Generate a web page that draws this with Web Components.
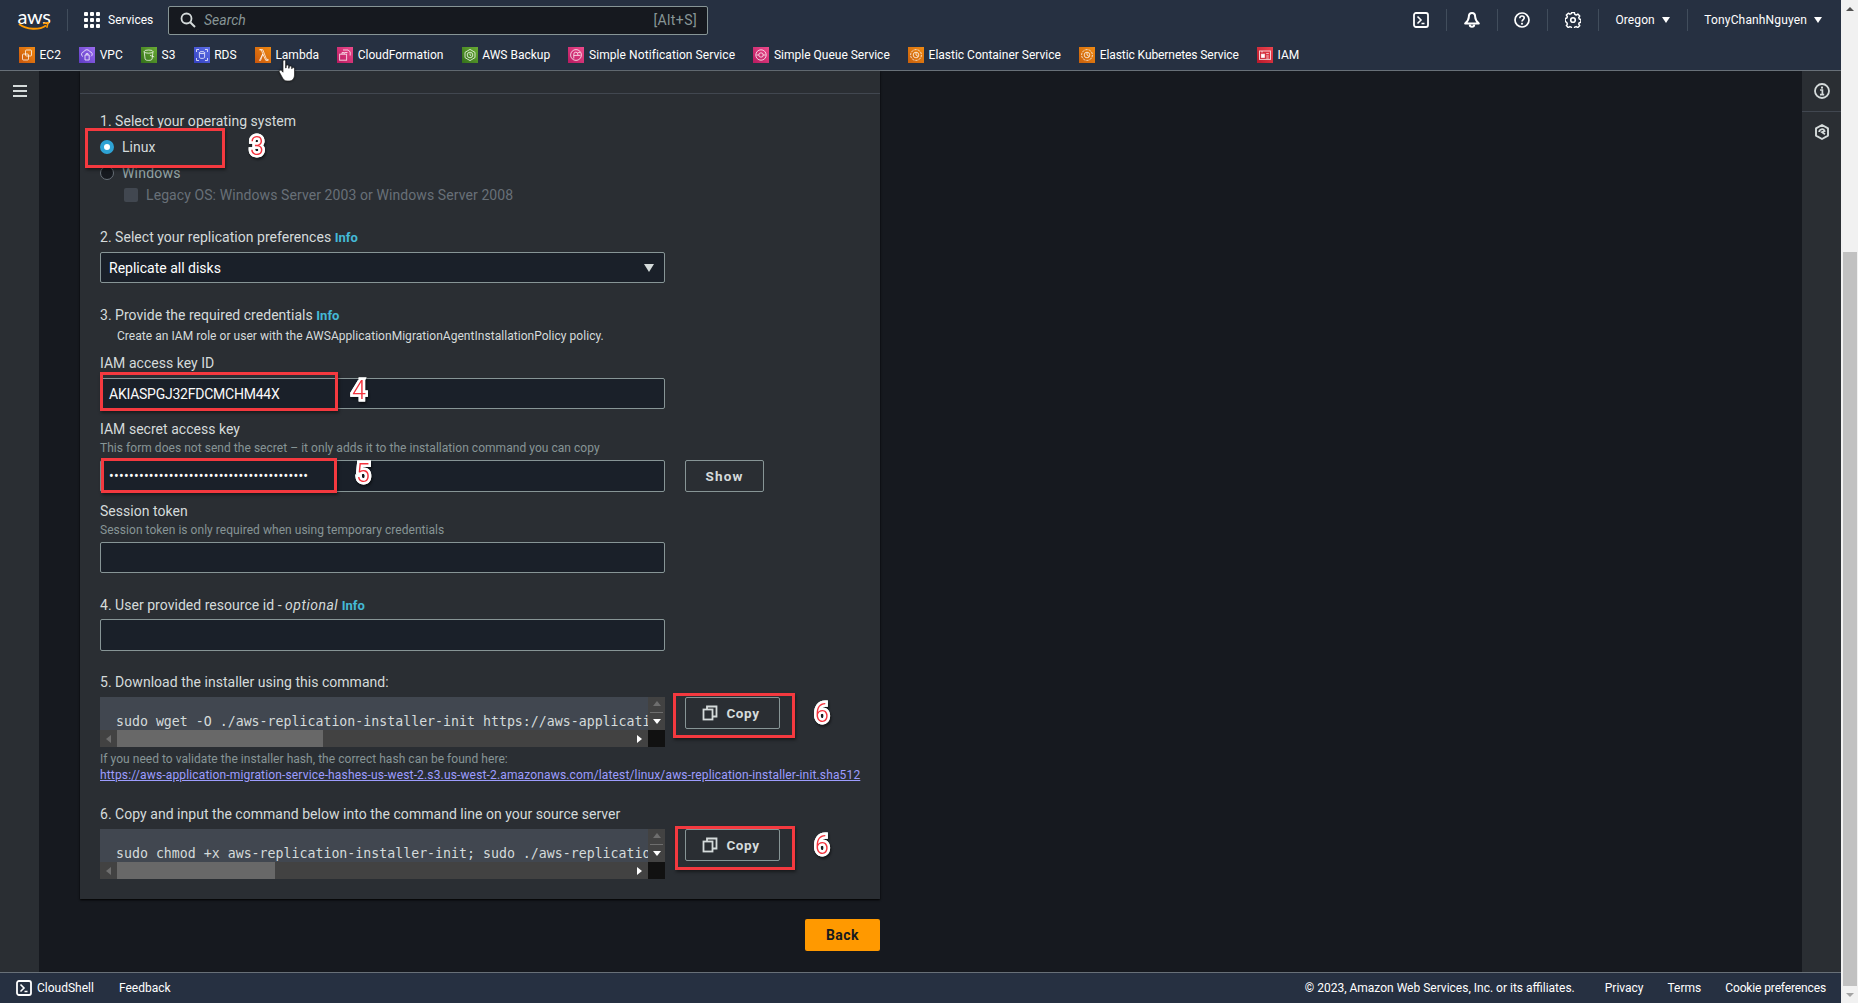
<!DOCTYPE html>
<html lang="en">
<head>
<meta charset="utf-8">
<title>Application Migration Service</title>
<style>
  html, body { margin: 0; height: 100%; overflow: hidden; background: #16191f; }
  body { font-family: Roboto, "Liberation Sans", sans-serif; font-size: 14px; color: #d5dbdb; }
</style>
</head>
<body>
<aws-console>
  <aws-header slot="header">
    <nav-item><nav-icon name="shell"></nav-icon></nav-item>
    <nav-item divided><nav-icon name="bell"></nav-icon></nav-item>
    <nav-item divided><nav-icon name="help"></nav-icon></nav-item>
    <nav-item divided><nav-icon name="gear"></nav-icon></nav-item>
    <nav-item divided caret style="letter-spacing:.1px">Oregon</nav-item>
    <nav-item divided caret style="letter-spacing:.15px">TonyChanhNguyen</nav-item>
    <fav-item slot="favs" color="#f08a12,#c9560c" icon="ec2">EC2</fav-item>
    <fav-item slot="favs" color="#9a6bf0,#5f3cc4" icon="vpc">VPC</fav-item>
    <fav-item slot="favs" color="#6aac34,#33701a" icon="s3">S3</fav-item>
    <fav-item slot="favs" color="#5f70e8,#3240c0" icon="rds">RDS</fav-item>
    <fav-item slot="favs" color="#f08a12,#c9560c" icon="lambda">Lambda</fav-item>
    <fav-item slot="favs" color="#ee4a8c,#b81a60" icon="cf">CloudFormation</fav-item>
    <fav-item slot="favs" color="#6aac34,#33701a" icon="backup">AWS Backup</fav-item>
    <fav-item slot="favs" color="#ee4a8c,#b81a60" icon="sns" style="letter-spacing:.08px">Simple Notification Service</fav-item>
    <fav-item slot="favs" color="#ee4a8c,#b81a60" icon="sqs">Simple Queue Service</fav-item>
    <fav-item slot="favs" color="#f08a12,#c9600c" icon="ecs">Elastic Container Service</fav-item>
    <fav-item slot="favs" color="#f08a12,#c9600c" icon="ecs" style="letter-spacing:-.08px">Elastic Kubernetes Service</fav-item>
    <fav-item slot="favs" color="#ee444e,#b8182a" icon="iam">IAM</fav-item>
  </aws-header>

  <left-rail slot="left"></left-rail>

  <aws-panel>
    <step-label>1. Select your operating system</step-label>
    <radio-row mt="6" checked>Linux</radio-row>
    <radio-row mt="6" dim>Windows</radio-row>
    <check-row mt="2">Legacy OS: Windows Server 2003 or Windows Server 2008</check-row>

    <step-label mt="22">2. Select your replication preferences <info-link>Info</info-link></step-label>
    <select-field mt="5">Replicate all disks</select-field>

    <step-label mt="22">3. Provide the required credentials <info-link>Info</info-link></step-label>
    <field-hint mt="3" indent>Create an IAM role or user with the AWSApplicationMigrationAgentInstallationPolicy policy.</field-hint>
    <step-label mt="9">IAM access key ID</step-label>
    <text-field mt="5" short tight>AKIASPGJ32FDCMCHM44X</text-field>

    <step-label mt="10">IAM secret access key</step-label>
    <field-hint mt="1">This form does not send the secret – it only adds it to the installation command you can copy</field-hint>
    <form-row mt="4">
      <text-field secret>••••••••••••••••••••••••••••••••••••••••</text-field>
      <plain-button>Show</plain-button>
    </form-row>

    <step-label mt="9">Session token</step-label>
    <field-hint mt="1">Session token is only required when using temporary credentials</field-hint>
    <text-field mt="4" short></text-field>

    <step-label mt="22">4. User provided resource id - <em>optional</em> <info-link>Info</info-link></step-label>
    <text-field mt="4"></text-field>

    <step-label mt="21">5. Download the installer using this command:</step-label>
    <form-row mt="5">
      <code-box thumb="206">sudo wget -O ./aws-replication-installer-init https://aws-applicati</code-box>
      <plain-button copy>Copy</plain-button>
    </form-row>
    <field-hint mt="4">If you need to validate the installer hash, the correct hash can be found here:</field-hint>
    <field-hint><a href="#">https://aws-application-migration-service-hashes-us-west-2.s3.us-west-2.amazonaws.com/latest/linux/aws-replication-installer-init.sha512</a></field-hint>

    <step-label mt="21">6. Copy and input the command below into the command line on your source server</step-label>
    <form-row mt="5">
      <code-box thumb="158">sudo chmod +x aws-replication-installer-init; sudo ./aws-replicatio</code-box>
      <plain-button copy>Copy</plain-button>
    </form-row>

    <annot-box slot="over" x="5" y="57" w="140" h="40"></annot-box>
    <annot-num slot="over" x="177" y="76">3</annot-num>
    <annot-box slot="over" x="20" y="301" w="238" h="39"></annot-box>
    <annot-num slot="over" x="279" y="320">4</annot-num>
    <annot-box slot="over" x="21" y="387" w="236" h="35"></annot-box>
    <annot-num slot="over" x="283" y="403">5</annot-num>
    <annot-box slot="over" x="593" y="622" w="122" h="45"></annot-box>
    <annot-num slot="over" x="742" y="643">6</annot-num>
    <annot-box slot="over" x="595" y="755" w="120" h="44"></annot-box>
    <annot-num slot="over" x="742" y="775">6</annot-num>
  </aws-panel>
  <primary-row>Back</primary-row>

  <right-rail slot="right"></right-rail>

  <aws-footer slot="footer">
    <span style="margin-right:6px">© 2023, Amazon Web Services, Inc. or its affiliates.</span>
    <span>Privacy</span>
    <span>Terms</span>
    <span style="letter-spacing:-.13px">Cookie preferences</span>
  </aws-footer>
  <page-scrollbar slot="scrollbar"></page-scrollbar>
  <hand-cursor slot="cursor"></hand-cursor>
</aws-console>

<script>
const ICONS = {
  shell: '<rect x="1" y="1" width="14" height="14" rx="2" fill="none" stroke="#fff" stroke-width="1.8"/><path d="M4.5 4.5 8 8l-3.5 3.5M8.5 11.5h3" fill="none" stroke="#fff" stroke-width="1.6"/>',
  bell: '<path d="M8 1c-2.200 0-3.200 1.800-3.200 4 0 2.800-1.600 4.600-3.600 6.500h13.600c-2-1.900-3.600-3.700-3.600-6.500 0-2.200-1-4-3.200-4z" fill="none" stroke="#fff" stroke-width="2" stroke-linejoin="round"/><path d="M5.800 12.500a2.200 2.200 0 0 0 4.400 0" fill="none" stroke="#fff" stroke-width="2"/>',
  help: '<circle cx="8" cy="8" r="7" fill="none" stroke="#fff" stroke-width="1.7"/><path d="M5.800 6.200C5.900 4.800 6.800 4 8 4s2.200.8 2.200 2c0 1.500-2.200 1.700-2.200 3.600" fill="none" stroke="#fff" stroke-width="1.6"/><rect x="7.100" y="10.800" width="1.800" height="1.800" fill="#fff"/>',
  gear: '<path d="M6.600 1h2.800l.4 1.900 1.400.6 1.700-1 1.900 2-1 1.600.6 1.500 1.600.5v2.800l-1.700.4-.5 1.400 1 1.700-2 1.900-1.600-1-1.500.6-.4 1.600H6.600l-.4-1.700-1.400-.5-1.700 1-1.900-2 1-1.600-.6-1.500L0 9.800V7l1.700-.4.5-1.400-1-1.700 2-1.900 1.600 1 1.500-.6z" transform="translate(.2 -.4) scale(.98)" fill="none" stroke="#fff" stroke-width="1.5" stroke-linejoin="round"/><circle cx="8" cy="8" r="2.300" fill="none" stroke="#fff" stroke-width="1.6"/>',
  info: '<circle cx="8" cy="8" r="7" fill="none" stroke="#d5dbdb" stroke-width="1.8"/><rect x="7" y="3.600" width="2" height="2" fill="#d5dbdb"/><path d="M6 7h2.400v4.400M6 11.600h4.200" fill="none" stroke="#d5dbdb" stroke-width="1.7"/>',
  hex: '<path d="M8 1l6 3.400v7.200L8 15l-6-3.400V4.400z" fill="none" stroke="#d5dbdb" stroke-width="1.9" stroke-linejoin="round"/><path d="M5.200 8A2.800 2.800 0 0 1 10.600 7L8 8.200l3 2" fill="none" stroke="#d5dbdb" stroke-width="1.8"/>',
  copy: '<rect x="1.500" y="4.500" width="9" height="10" fill="none" stroke="#d5dbdb" stroke-width="1.8"/><path d="M5 4.500V1.500h9.500v10h-4" fill="none" stroke="#d5dbdb" stroke-width="1.8"/>'
};

const SERVICE_GLYPHS = {
  ec2: '<rect x="6.500" y="3" width="6" height="6" rx="1"/><rect x="3.500" y="7" width="6" height="6" rx="1"/>',
  vpc: '<path d="M4 9.500a2.400 2.400 0 0 1 .7-4.600A3.400 3.400 0 0 1 11 4.800a2.400 2.400 0 0 1 1 4.500"/><path d="M6 8h4.200v5H6zM7.200 8V6.600h1.800V8"/>',
  s3: '<ellipse cx="7.600" cy="4.600" rx="4.400" ry="1.600"/><path d="M3.200 4.600l.9 7.400c.2 1 1.800 1.400 3.500 1.400s3.300-.4 3.500-1.400l.9-7.400M9 8.400l4.200 1.500"/>',
  rds: '<ellipse cx="8" cy="5.600" rx="2.600" ry="1"/><path d="M5.400 5.600v4.800c0 .6 1.200 1 2.600 1s2.600-.4 2.600-1V5.600M2.500 5V2.500H5M13.500 5V2.500H11M2.500 11v2.500H5M13.500 11v2.500H11"/>',
  lambda: '<path d="M4.500 13.400 7.800 6.800 6.300 2.800H4.600v-.1h3.200l3.700 9.700h1.700v1h-2.400L7.800 7 5.600 13.400z"/>',
  cf: '<path d="M6 3h5.200l2 2v3.500M7.500 5.500h3"/><rect x="2.600" y="7.200" width="7" height="6"/><path d="M5 7.200V5.600h2.200v1.600"/>',
  backup: '<path d="M8 2.400l5 3v5.200l-5 3-5-3V5.400z"/><circle cx="8" cy="8" r="2.800"/><path d="M8 6.400V8l1.200.8"/>',
  sns: '<circle cx="8" cy="8" r="5.400"/><path d="M5.800 11.600V7.200a2 2 0 0 1 4 0v1.200h-4M9.800 8.400h2.600M9.800 5.600h2.400"/>',
  sqs: '<circle cx="8" cy="8" r="5.200"/><circle cx="8" cy="8" r="2.200"/><path d="M3.400 8h2.400M10.200 8h2.400"/>',
  ecs: '<circle cx="8" cy="8" r="5.400" stroke-dasharray="2.400 .9"/><circle cx="8" cy="8" r="2.800"/><path d="M8 5.200v2.800l2 1.400"/>',
  iam: '<rect x="2.500" y="4" width="11" height="8.400"/><rect x="4.400" y="7.200" width="3" height="3.200" fill="#fff"/><path d="M9.200 6.600h2.600M9.200 9h2.600M9.200 11h2.600M5 4v1.600"/>'
};

// base class, every element here gets its shadow root from the markup it is given
class Base extends HTMLElement {
  constructor() {
    super();
    this.attachShadow({ mode: 'open' });
    this.shadowRoot.innerHTML = this.constructor.markup || '';
  }
  connectedCallback() {
    if (this.hasAttribute('mt')) this.style.marginTop = this.getAttribute('mt') + 'px';
    this.setup();
  }
  setup() {}
}

function define(name, markup, setup) {
  customElements.define(name, class extends Base {
    static markup = markup;
    setup() { if (setup) setup.call(this); }
  });
}

define('aws-console', `
  <style>
    :host { display: grid; width: 1858px; height: 1003px; grid-template-columns: 40px 1761px 40px 17px; grid-template-rows: 71px 901px 31px; position: relative; overflow: hidden; }
    ::slotted([slot=header]) { grid-column: 1 / 4; grid-row: 1; }
    ::slotted([slot=left]) { grid-column: 1; grid-row: 2; }
    main { grid-column: 2; grid-row: 2; display: flex; flex-direction: column; padding-left: 40px; width: 800px; }
    ::slotted([slot=right]) { grid-column: 3; grid-row: 2; }
    ::slotted([slot=footer]) { grid-column: 1 / 4; grid-row: 3; }
    ::slotted([slot=scrollbar]) { grid-column: 4; grid-row: 1 / 4; }
  </style>
  <slot name="header"></slot>
  <slot name="left"></slot>
  <main><slot></slot></main>
  <slot name="right"></slot>
  <slot name="footer"></slot>
  <slot name="scrollbar"></slot>
  <slot name="cursor"></slot>`);

define('aws-header', `
  <style>
    :host { display: flex; flex-direction: column; background: #263041; border-bottom: 1px solid #687078; box-sizing: border-box; color: #fff; font-size: 12px; }
    .top { height: 40px; display: flex; align-items: center; padding: 0 2px 0 18px; }
    .logo { width: 32px; height: 24px; margin-top: -1px; position: relative; display: flex; flex-direction: column; align-items: center; }
    .logo b { font: 400 20px/16px Lato, Roboto, sans-serif; letter-spacing: -.4px; color: #fff; }
    .logo svg { position: absolute; left: 0; top: 13px; }
    .sep { width: 1px; height: 22px; background: #414d5c; margin: 0 16px 0 17px; }
    .services { display: flex; align-items: center; gap: 8px; width: 84px; }
    .grid { width: 16px; height: 16px; display: grid; grid-template-columns: repeat(3, 4px); gap: 2px; }
    .grid i { background: #fff; border-radius: 1px; }
    .search { width: 540px; height: 29px; box-sizing: border-box; background: #16191f; border: 1px solid #879596; border-radius: 2px; display: flex; align-items: center; padding: 0 10px 0 11px; color: #879596; font-size: 14px; }
    .search svg { margin-right: 8px; }
    .search em { flex: 1; font-style: italic; color: #879596; }
    .search span { letter-spacing: .4px; }
    .right { margin-left: auto; display: flex; align-items: center; }
    .favs { flex: 1; display: flex; align-items: center; gap: 18.300px; padding: 0 0 0 19px; }
  </style>
  <div class="top">
    <div class="logo"><b>aws</b>
      <svg width="32" height="12" viewBox="0 0 32 12"><path d="M1 3c8 6 20 6.400 27 1.500" fill="none" stroke="#f90" stroke-width="2"/><path d="M25 2.500l5-.7-1.200 5" fill="none" stroke="#f90" stroke-width="1.600"/></svg>
    </div>
    <div class="sep"></div>
    <div class="services"><div class="grid"><i></i><i></i><i></i><i></i><i></i><i></i><i></i><i></i><i></i></div>Services</div>
    <div class="search">
      <svg width="16" height="16" viewBox="0 0 16 16"><circle cx="6.500" cy="6.500" r="5" fill="none" stroke="#d5dbdb" stroke-width="1.800"/><path d="M10.200 10.200 15 15" stroke="#d5dbdb" stroke-width="2"/></svg>
      <em>Search</em><span>[Alt+S]</span>
    </div>
    <div class="right"><slot></slot></div>
  </div>
  <div class="favs"><slot name="favs"></slot></div>`);

define('nav-item', `
  <style>
    :host { display: flex; align-items: center; height: 22px; padding: 0 17px 0 16.500px; font-size: 12px; color: #fff; gap: 7px; white-space: nowrap; }
    :host([divided]) { border-left: 1px solid #414d5c; }
    .caret { display: none; width: 0; height: 0; border: 4px solid transparent; border-top: 6px solid #fff; border-bottom: 0; }
    :host([caret]) .caret { display: block; }
  </style>
  <slot></slot><i class="caret"></i>`);

define('nav-icon', `<style>:host { display: block; width: 16px; height: 16px; } svg { display: block; }</style><svg width="16" height="16" viewBox="0 0 16 16"></svg>`,
  function () { this.shadowRoot.querySelector('svg').innerHTML = ICONS[this.getAttribute('name')]; });

define('fav-item', `
  <style>
    :host { display: inline-flex; align-items: center; gap: 4.500px; font-size: 12px; color: #fff; white-space: nowrap; }
    .tile { width: 16px; height: 16px; display: block; }
    svg { display: block; }
    g { fill: none; stroke: #fff; stroke-opacity: .75; stroke-width: 1; }
  </style>
  <span class="tile"><svg width="16" height="16" viewBox="0 0 16 16"><g></g></svg></span><slot></slot>`,
  function () {
    const [from, to] = this.getAttribute('color').split(',');
    this.shadowRoot.querySelector('.tile').style.background = `linear-gradient(45deg, ${to}, ${from})`;
    this.shadowRoot.querySelector('g').innerHTML = SERVICE_GLYPHS[this.getAttribute('icon')];
  });

define('left-rail', `
  <style>
    :host { display: block; background: #2a2e33; border-right: 1px solid #16191f; box-sizing: border-box; padding: 14px 0 0 13px; }
    i { display: block; width: 14px; height: 2px; background: #d5dbdb; margin-bottom: 3px; }
  </style>
  <i></i><i></i><i></i>`);

define('right-rail', `
  <style>
    :host { display: block; background: #2a2e33; border-left: 1px solid #16191f; box-sizing: border-box; }
    div { height: 40px; display: flex; align-items: center; justify-content: center; border-bottom: 1px solid #414750; }
    div + div { border: 0; }
  </style>
  <div><nav-icon name="info"></nav-icon></div>
  <div><nav-icon name="hex"></nav-icon></div>`);

define('aws-panel', `
  <style>
    :host { display: block; position: relative; background: #2a2e33; box-shadow: 0 1px 2px #000; }
    .head { height: 22px; border-bottom: 1px solid #414750; }
    .body { display: flex; flex-direction: column; padding: 17px 20px 20px; }
  </style>
  <div class="head"></div>
  <div class="body"><slot></slot></div>
  <slot name="over"></slot>`);

define('step-label', `
  <style>
    :host { display: block; font-size: 14px; line-height: 20px; letter-spacing: .03px; color: #d5dbdb; white-space: nowrap; }
    ::slotted(em) { letter-spacing: .5px; }
  </style>
  <slot></slot>`);

define('info-link', `
  <style>:host { font-size: 13px; line-height: 0; font-weight: 700; color: #44b9d6; }</style><slot></slot>`);

define('field-hint', `
  <style>
    :host { display: block; font-size: 12px; line-height: 16px; letter-spacing: .04px; color: #879596; white-space: nowrap; }
    :host([indent]) { padding-left: 17px; color: #d5dbdb; }
    ::slotted(a) { color: #9d9dff; letter-spacing: .15px; }
  </style>
  <slot></slot>`);

define('radio-row', `
  <style>
    :host { display: flex; align-items: center; gap: 8px; height: 20px; font-size: 14px; color: #d5dbdb; }
    :host([dim]) { color: #95a5a6; letter-spacing: .2px; }
    i { width: 14px; height: 14px; box-sizing: border-box; border-radius: 50%; background: #16191f; border: 1.500px solid #687078; }
    :host([checked]) i { background: #fff; border: 4.500px solid #2ea2d4; }
  </style>
  <i></i><slot></slot>`);

define('check-row', `
  <style>
    :host { display: flex; align-items: center; gap: 8px; height: 20px; padding-left: 24px; font-size: 14px; letter-spacing: .09px; color: #687078; white-space: nowrap; }
    i { width: 14px; height: 14px; border-radius: 2px; background: #414750; }
  </style>
  <i></i><slot></slot>`);

define('select-field', `
  <style>
    :host { display: flex; align-items: center; justify-content: space-between; width: 565px; height: 31px; box-sizing: border-box; padding: 0 8px; background: #1a2029; border: 1px solid #879596; border-radius: 2px; font-size: 14px; color: #fff; }
    i { width: 0; height: 0; border: 5.500px solid transparent; border-top: 8px solid #d5dbdb; border-bottom: 0; margin-right: 2px; }
  </style>
  <slot></slot><i></i>`);

define('text-field', `
  <style>
    :host { display: flex; align-items: center; width: 565px; height: 32px; flex: none; box-sizing: border-box; padding: 0 8px; background: #1a2029; border: 1px solid #879596; border-radius: 2px; font-size: 14px; color: #fafafa; white-space: nowrap; }
    :host([short]) { height: 31px; }
    :host([tight]) { letter-spacing: -.24px; }
    :host([secret]) { letter-spacing: .26px; }
  </style>
  <slot></slot>`);

define('form-row', `
  <style>:host { display: flex; align-items: flex-start; gap: 20px; }</style><slot></slot>`);

define('plain-button', `
  <style>
    :host { display: flex; align-items: center; justify-content: center; gap: 8px; box-sizing: border-box; width: 79px; height: 32px; border: 1px solid #879596; border-radius: 2px; font-size: 13.500px; font-weight: 700; letter-spacing: 1.200px; color: #d5dbdb; }
    :host([copy]) { width: 95px; letter-spacing: .6px; padding-right: 3px; }
    svg { display: none; }
    :host([copy]) svg { display: block; }
  </style>
  <svg width="16" height="16" viewBox="0 0 16 16">${ICONS.copy}</svg><slot></slot>`);

define('code-box', `
  <style>
    :host { display: grid; grid-template-columns: 548px 17px; grid-template-rows: 33px 17px; width: 565px; flex: none; background: #414750; }
    .code { padding: 15px 0 0 16px; font: 13.250px/20px "DejaVu Sans Mono", "Liberation Mono", monospace; color: #d5dbdb; overflow: hidden; white-space: nowrap; box-sizing: border-box; }
    .v { background: #424242; display: flex; flex-direction: column; align-items: center; padding-top: 4px; box-sizing: border-box; }
    .up { width: 0; height: 0; border: 4.500px solid transparent; border-bottom: 5px solid #6e6e6e; border-top: 0; }
    .line { width: 13px; height: 1px; background: #6e6e6e; margin: 6px 0 6px; }
    .down { width: 0; height: 0; border: 4.500px solid transparent; border-top: 5px solid #fff; border-bottom: 0; }
    .h { background: #424242; display: flex; align-items: stretch; }
    .l, .r { flex: none; width: 17px; display: flex; align-items: center; justify-content: center; }
    .l i { width: 0; height: 0; border: 4.500px solid transparent; border-right: 5px solid #6e6e6e; border-left: 0; }
    .r i { width: 0; height: 0; border: 4.500px solid transparent; border-left: 5px solid #fff; border-right: 0; }
    .thumb { background: #686868; }
    .fill { flex: 1; }
    .corner { background: #111; }
  </style>
  <div class="code"><slot></slot></div>
  <div class="v"><i class="up"></i><i class="line"></i><i class="down"></i></div>
  <div class="h"><span class="l"><i></i></span><span class="thumb"></span><span class="fill"></span><span class="r"><i></i></span></div>
  <div class="corner"></div>`,
  function () { this.shadowRoot.querySelector('.thumb').style.width = this.getAttribute('thumb') + 'px'; });

define('primary-row', `
  <style>
    :host { display: flex; justify-content: flex-end; margin-top: 20px; }
    div { width: 75px; height: 32px; display: flex; align-items: center; justify-content: center; background: #f90; border-radius: 2px; font-size: 14px; font-weight: 700; letter-spacing: .5px; color: #16191f; }
  </style>
  <div><slot></slot></div>`);

define('aws-footer', `
  <style>
    :host { display: flex; align-items: center; background: #263041; border-top: 1px solid #687078; box-sizing: border-box; padding: 0 15px 0 16px; font-size: 12px; color: #fff; white-space: nowrap; }
    .left { display: flex; align-items: center; gap: 5px; }
    .fb { margin-left: 25px; }
    .right { margin-left: auto; display: flex; gap: 24px; }
    svg { display: block; }
  </style>
  <div class="left"><svg width="16" height="16" viewBox="0 0 16 16">${ICONS.shell}</svg>CloudShell</div>
  <div class="fb">Feedback</div>
  <div class="right"><slot></slot></div>`);

define('page-scrollbar', `
  <style>
    :host { display: flex; flex-direction: column; align-items: center; background: #f1f1f1; }
    .btn { flex: none; height: 17px; width: 100%; display: flex; align-items: center; justify-content: center; }
    .up { width: 0; height: 0; border: 4px solid transparent; border-bottom: 4px solid #505050; border-top: 0; }
    .down { width: 0; height: 0; border: 4px solid transparent; border-top: 4px solid #a3a3a3; border-bottom: 0; }
    .gap { flex: none; height: 235px; }
    .thumb { flex: 1; width: 14px; background: #c1c1c1; }
  </style>
  <div class="btn"><i class="up"></i></div><div class="gap"></div><div class="thumb"></div><div class="btn"><i class="down"></i></div>`);

define('annot-box', `
  <style>
    :host { display: block; position: absolute; box-sizing: border-box; border: 3px solid #f4393f; box-shadow: 1px 2px 3px rgba(0,0,0,.45); }
  </style>`,
  function () {
    this.style.left = this.getAttribute('x') + 'px';
    this.style.top = this.getAttribute('y') + 'px';
    this.style.width = this.getAttribute('w') + 'px';
    this.style.height = this.getAttribute('h') + 'px';
  });

define('annot-num', `
  <style>
    :host { display: block; position: absolute; transform: translate(-50%, -50%); font: 300 25px/26px Roboto, "Liberation Sans", sans-serif; color: #f4333d; -webkit-text-stroke: 5px #fff; paint-order: stroke fill; filter: drop-shadow(0 0 .6px #fff) drop-shadow(1px 2px 1px rgba(0,0,0,.5)); }
  </style>
  <slot></slot>`,
  function () {
    this.style.left = this.getAttribute('x') + 'px';
    this.style.top = this.getAttribute('y') + 'px';
  });

define('hand-cursor', `
  <style>:host { display: block; position: absolute; left: 278px; top: 59px; width: 19px; height: 23px; filter: drop-shadow(0 0 1px rgba(0,0,0,.6)); } svg { display: block; }</style>
  <svg width="19" height="23" viewBox="0 0 19 23"><path d="M5 2.200a1.300 1.300 0 0 1 2.600 0V9l.6-.2V7.200a1.200 1.200 0 0 1 2.400 0v2l.6 0V8.200a1.200 1.200 0 0 1 2.400 0v1.400l.5 0a1.200 1.200 0 0 1 2.400.3V16c0 3-2 6-5.200 6H9c-2.500 0-3.600-1.500-4.800-3.700L1.300 13c-.7-1.300 1-2.600 2.200-1.400L5 13.200z" fill="#fff" stroke="#222" stroke-width=".7"/></svg>`);
</script>
</body>
</html>
